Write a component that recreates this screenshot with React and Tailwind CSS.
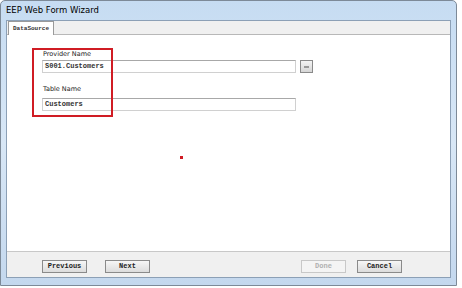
import React from 'react';

function Btn({ label, disabled }) {
  return (
    <button
      className={
        'w-[45px] h-[13px] border flex items-center justify-center text-[7px] font-bold leading-none ' +
        (disabled
          ? 'border-[#c8c8c8] bg-[#f4f4f4] text-[#b0b0b0]'
          : 'border-[#8a8a8a] bg-gradient-to-b from-[#f6f6f6] to-[#dcdcdc] text-[#222]')
      }
      style={{ fontFamily: '"Liberation Mono", monospace' }}
    >
      {label}
    </button>
  );
}

function Field({ value }) {
  return (
    <div
      className="h-[13px] border border-[#d0d0d0] border-t-[#a8a8a8] bg-white flex items-center pl-[2px] text-[7px] font-semibold text-[#333] leading-none"
      style={{ fontFamily: '"Liberation Mono", monospace' }}
    >
      {value}
    </div>
  );
}

export default function App() {
  return (
    <div className="w-[462px] h-[288px] bg-white" style={{ fontFamily: 'Tahoma, "DejaVu Sans", sans-serif' }}>
      <div className="w-[457px] h-[286px] border border-[#7d8a98] rounded-t-[5px] bg-gradient-to-b from-[#c6dcf2] via-[#d8e7f6] to-[#c4d8ee] flex flex-col">
        {/* title bar */}
        <div className="h-[19px] flex items-center pl-[5px] text-[8.5px] text-black">EEP Web Form Wizard</div>

        <div className="flex-1 mx-[5px] mb-[7px] border border-[#8ca0b6] bg-[#f0f0f0] flex flex-col">
          {/* tab strip */}
          <div className="h-[14px] flex items-end border-b border-[#b8b8b8]">
            <div
              className="h-[14px] w-[46px] ml-[1px] border border-b-0 border-[#9a9a9a] bg-white flex items-center justify-center text-[6px] font-bold text-[#333] -mb-px"
              style={{ fontFamily: '"Liberation Mono", monospace' }}
            >
              DataSource
            </div>
          </div>

          {/* content */}
          <div className="h-[217px] bg-white border-b border-[#c8c8c8] flex flex-col">
            <div className="relative pl-[35px] pt-[13px]">
              <div className="absolute left-[25px] top-[13px] w-[81px] h-[69px] border-[2px] border-[#d01c24]" />
              <div className="w-[254px] flex flex-col">
                <div className="text-[6.5px] text-[#222] leading-none pl-[1px] pt-[3px] h-[12px]">Provider Name</div>
                <div className="flex items-center gap-[4px]">
                  <div className="flex-1">
                    <Field value="S001.Customers" />
                  </div>
                  <div className="w-[13px] h-[13px] border border-[#8a8a8a] bg-gradient-to-b from-[#f4f4f4] to-[#d6d6d6] flex items-center justify-center -mr-[17px]">
                    <div className="w-[5px] h-[2px] bg-[#999]" />
                  </div>
                </div>
                <div className="text-[6.5px] text-[#222] leading-none pl-[1px] pt-[13px] h-[25px]">Table Name</div>
                <Field value="Customers" />
              </div>
            </div>
            <div className="ml-[173px] mt-[45px] w-[3px] h-[3px] bg-[#d01c24]" />
          </div>

          {/* buttons */}
          <div className="flex-1 flex items-center px-[35px] pt-[3px]">
            <div className="flex gap-[18px]">
              <Btn label="Previous" />
              <Btn label="Next" />
            </div>
            <div className="ml-auto flex gap-[11px] mr-[13px]">
              <Btn label="Done" disabled />
              <Btn label="Cancel" />
            </div>
          </div>
        </div>
      </div>
    </div>
  );
}
